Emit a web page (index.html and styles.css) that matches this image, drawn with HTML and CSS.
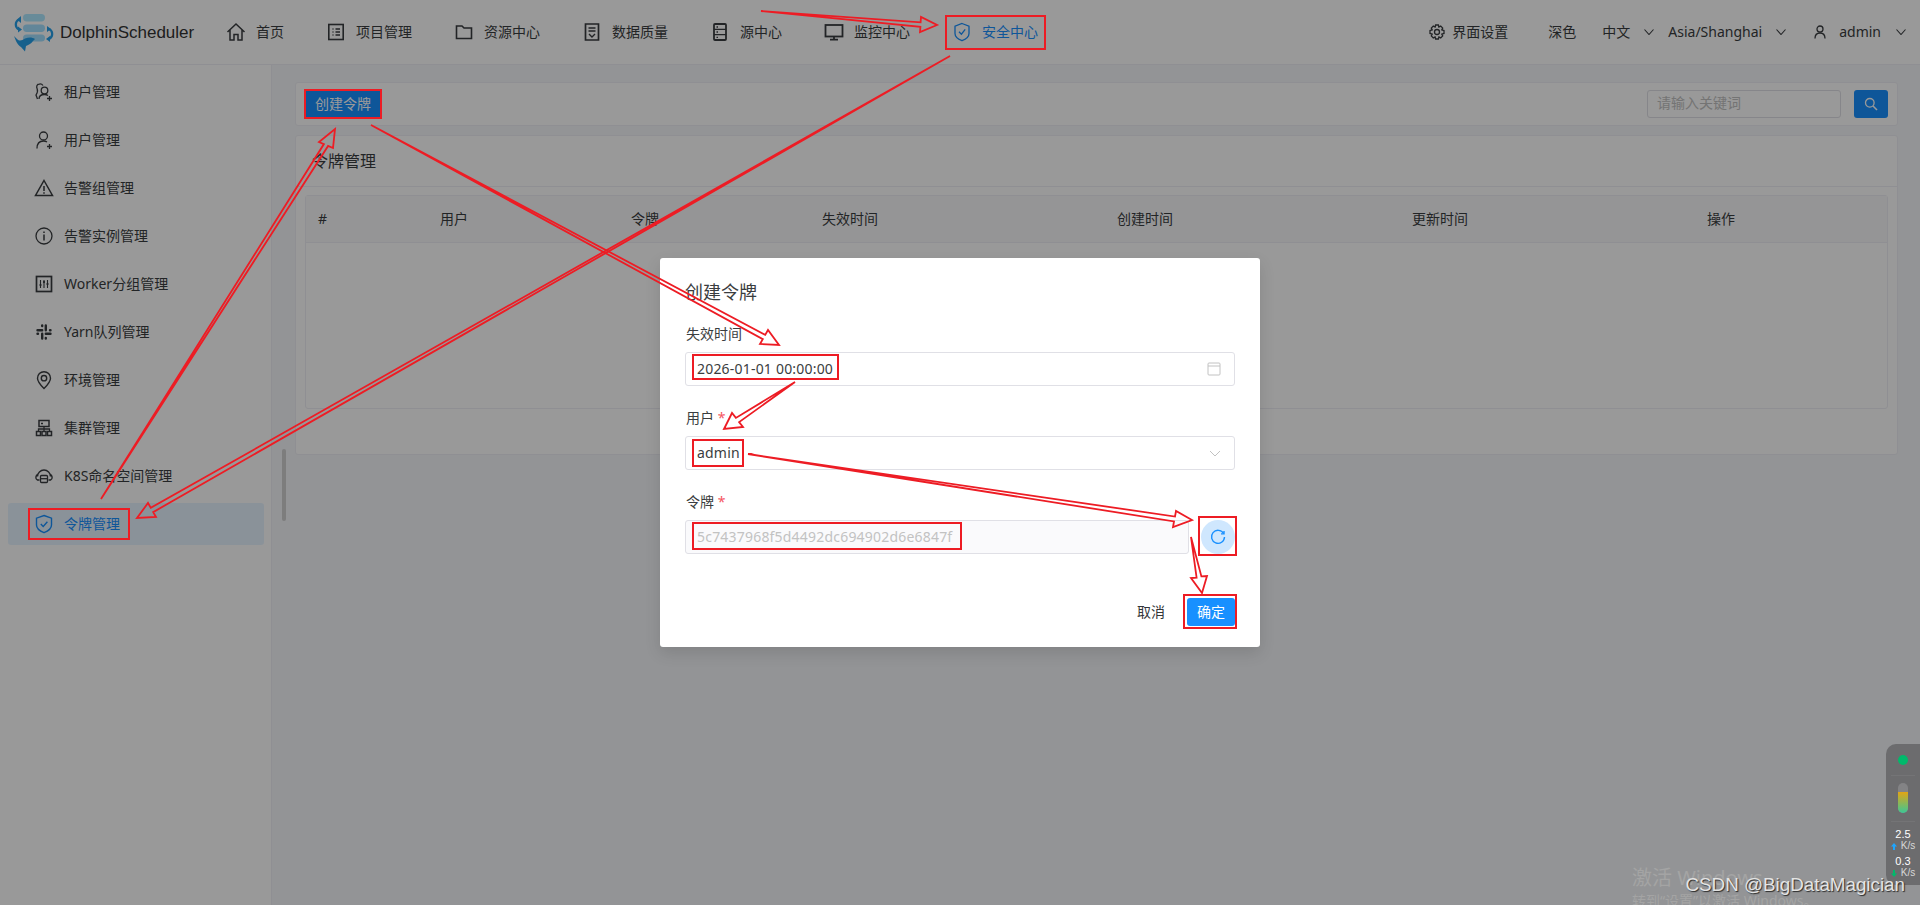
FILE: index.html
```html
<!DOCTYPE html>
<html lang="zh-CN">
<head>
  <meta charset="UTF-8">
  <title>DolphinScheduler</title>
  <link rel="stylesheet" href="styles.css">
</head>
<body>
  <div class="page">
    <header class="topbar">
      <div class="logo">
        <svg class="logo-icon" viewBox="0 0 44 38" width="44" height="38">
          <rect x="11" y="0" width="22" height="7.5" rx="3.7" fill="#aee8ff"/>
          <rect x="11" y="10.5" width="22" height="7.5" rx="3.7" fill="#a4e0ff"/>
          <rect x="11" y="20.5" width="22" height="7" rx="3.5" fill="#a4e0ff"/>
          <path d="M7 5.5 A5.5 5.5 0 0 0 7 15.5" fill="none" stroke="#26a0ea" stroke-width="2.2"/>
          <path d="M9 2 L5 5.5 L9 9 Z M6 12.5 L10 15.5 L6 18.5 Z" fill="#26a0ea"/>
          <path d="M37 15 A5.5 5.5 0 0 1 37 25" fill="none" stroke="#26a0ea" stroke-width="2.2"/>
          <path d="M35 12 L39 15 L35 18 Z M38 22 L34 25 L38 28 Z" fill="#26a0ea"/>
          <path d="M2 22 L5 25 C8 28 10 26 13 24.5 C17 23 20 23 23 25 L21 27 C19 30 16 31 14 32 L13 37.5 L9 33 C7 32 5 29 4 27 Z" fill="#26a0ea"/>
        </svg>
        <span class="logo-text">DolphinScheduler</span>
      </div>
      <nav class="nav">
        <a class="nav-item">
          <svg class="ico" viewBox="0 0 20 20"><path d="M1.5 10 L10 2 L18.5 10 M4 8 V18 H8 V12.5 H12 V18 H16 V8" stroke-width="1.5"/></svg>
          <span>首页</span>
        </a>
        <a class="nav-item">
          <svg class="ico" viewBox="0 0 20 20"><rect x="2.8" y="2.5" width="14.4" height="15" stroke-width="1.6"/><path d="M6.5 7 H7.5 M9.5 7 H14 M6.5 10 H7.5 M9.5 10 H14 M6.5 13 H7.5 M9.5 13 H14"/></svg>
          <span>项目管理</span>
        </a>
        <a class="nav-item">
          <svg class="ico" viewBox="0 0 20 20"><path d="M2.5 4 H8 L10 6 H17.5 V16.5 H2.5 Z" stroke-width="1.6"/></svg>
          <span>资源中心</span>
        </a>
        <a class="nav-item">
          <svg class="ico" viewBox="0 0 20 20"><path d="M3.5 2 H16.5 V18 H3.5 Z" stroke-width="1.7"/><path d="M6.5 6 H13.5 M6.5 9 H13.5 M7 12 L10 15 L13 12" stroke-width="1.4"/></svg>
          <span>数据质量</span>
        </a>
        <a class="nav-item">
          <svg class="ico" viewBox="0 0 20 20"><rect x="4" y="2" width="12" height="16" rx="1" stroke-width="1.8"/><path d="M4 7.3 H16 M4 12.6 H16 M6.5 5 H8 M6.5 10 H8 M6.5 15.3 H8"/></svg>
          <span>源中心</span>
        </a>
        <a class="nav-item">
          <svg class="ico" viewBox="0 0 20 20"><rect x="1.5" y="3" width="17" height="11.5" stroke-width="1.8"/><path d="M10 14.5 V17.5 M6 17.7 H14" stroke-width="1.8"/></svg>
          <span>监控中心</span>
        </a>
        <a class="nav-item is-active">
          <svg class="ico" viewBox="0 0 20 20"><path d="M10 1.5 L17 4.2 V11.5 C17 15 13 17.5 10 18.7 C7 17.5 3 15 3 11.5 V4.2 Z"/><path d="M7 9.8 L9.4 12.2 L13.2 7.4"/></svg>
          <span>安全中心</span>
        </a>
      </nav>
      <div class="top-right">
        <a class="top-item settings">
          <svg class="ico ico-sm" viewBox="0 0 16 16"><path d="M6.6 1 H9.4 L9.9 3 L11.7 2.1 L13.7 4.1 L12.8 5.9 L15 6.6 V9.4 L12.8 10.1 L13.7 11.9 L11.7 13.9 L9.9 13 L9.4 15 H6.6 L6.1 13 L4.3 13.9 L2.3 11.9 L3.2 10.1 L1 9.4 V6.6 L3.2 5.9 L2.3 4.1 L4.3 2.1 L6.1 3 Z"/><circle cx="8" cy="8" r="2.5"/></svg>
          <span>界面设置</span>
        </a>
        <a class="top-item theme"><span>深色</span></a>
        <a class="top-item lang">
          <span>中文</span>
          <svg class="chev" viewBox="0 0 10 6"><path d="M0.5 0.5 L5 5.5 L9.5 0.5"/></svg>
        </a>
        <a class="top-item zone">
          <span>Asia/Shanghai</span>
          <svg class="chev" viewBox="0 0 10 6"><path d="M0.5 0.5 L5 5.5 L9.5 0.5"/></svg>
        </a>
        <a class="top-item user">
          <svg class="ico ico-user" viewBox="0 0 12 14"><circle cx="6" cy="4" r="3"/><path d="M1 13.5 C1 9.5 3 8 6 8 C9 8 11 9.5 11 13.5"/></svg>
          <span class="user-name">admin</span>
          <svg class="chev" viewBox="0 0 10 6"><path d="M0.5 0.5 L5 5.5 L9.5 0.5"/></svg>
        </a>
      </div>
    </header>

    <div class="layout">
      <aside class="sidebar">
        <a class="side-item">
          <svg class="ico" viewBox="0 0 20 20"><circle cx="10.5" cy="8.5" r="3.3"/><path d="M9 3.5 A3.6 3.6 0 0 0 5.5 2 C3 2 2 4.5 3.2 7 C4 9 4 10 2 13 L3.5 17 M5 17 C5 14 7 12.5 10.5 12.5 C12 12.5 13 12.8 14 13.5 M15.5 14 V19 M13 16.5 H18"/></svg>
          <span>租户管理</span>
        </a>
        <a class="side-item">
          <svg class="ico" viewBox="0 0 20 20"><circle cx="9.5" cy="6" r="4"/><path d="M3 18.5 C3 13.5 5.5 11 9.5 11 C11 11 12 11.3 13 12 M15.5 14 V19 M13 16.5 H18"/></svg>
          <span>用户管理</span>
        </a>
        <a class="side-item">
          <svg class="ico" viewBox="0 0 20 20"><path d="M10 2.5 L18.5 17.5 H1.5 Z" stroke-width="1.5"/><path d="M10 8 V13 M10 14.2 V15.8" stroke-width="1.5"/></svg>
          <span>告警组管理</span>
        </a>
        <a class="side-item">
          <svg class="ico" viewBox="0 0 20 20"><circle cx="10" cy="10" r="8"/><path d="M10 8.5 V14.5 M10 5.5 V7" stroke-width="1.5"/></svg>
          <span>告警实例管理</span>
        </a>
        <a class="side-item">
          <svg class="ico" viewBox="0 0 20 20"><rect x="2.5" y="2.5" width="15" height="15" stroke-width="1.7"/><path d="M6.5 6 V14 M10 6 V14 M13.5 6 V14" stroke-width="1.1"/><path d="M5.6 11 H7.4 M9.1 8 H10.9 M12.6 10 H14.4" stroke-width="2"/></svg>
          <span>Worker分组管理</span>
        </a>
        <a class="side-item">
          <svg class="ico" viewBox="0 0 20 20"><path d="M3.5 8.2 H8.2 M8.2 3.5 V4 M11.8 3.5 V8.2 M16.5 8.2 H16 M16.5 11.8 H11.8 M11.8 16.5 V16 M8.2 16.5 V11.8 M3.5 11.8 H4" stroke-width="2.4" stroke-linecap="round"/></svg>
          <span>Yarn队列管理</span>
        </a>
        <a class="side-item">
          <svg class="ico" viewBox="0 0 20 20"><path d="M10 18.5 C7 15.5 3.5 12 3.5 8.2 A6.5 6.5 0 0 1 16.5 8.2 C16.5 12 13 15.5 10 18.5 Z" stroke-width="1.4"/><circle cx="10" cy="8.2" r="2.7" stroke-width="1.4"/></svg>
          <span>环境管理</span>
        </a>
        <a class="side-item">
          <svg class="ico" viewBox="0 0 20 20"><rect x="5" y="2.5" width="10" height="6" stroke-width="1.5"/><path d="M7 5.5 H9" stroke-width="1.5"/><path d="M10 8.5 V13 M4.5 13 V11 H15.5 V13" stroke-width="1.3"/><rect x="2.5" y="13.5" width="4" height="4" stroke-width="1.5"/><rect x="8" y="13.5" width="4" height="4" stroke-width="1.5"/><rect x="13.5" y="13.5" width="4" height="4" stroke-width="1.5"/></svg>
          <span>集群管理</span>
        </a>
        <a class="side-item">
          <svg class="ico" viewBox="0 0 20 20"><path d="M3.5 10.5 A6.5 6.5 0 0 1 16.5 10.5" stroke-width="1.4"/><path d="M4 8.5 C1.5 9 1 13 3.5 14 H5.5 M16 8.5 C18.5 9 19 13 16.5 14 H14.5" stroke-width="1.4"/><rect x="6.5" y="9.5" width="7" height="7" rx="1" stroke-width="1.3"/><path d="M6.5 12.7 H13.5" stroke-width="1.3"/></svg>
          <span>K8S命名空间管理</span>
        </a>
        <a class="side-item is-active">
          <svg class="ico" viewBox="0 0 20 20"><path d="M10 1.5 L17.5 4.2 V11 C17.5 15 13 17.5 10 18.7 C7 17.5 2.5 15 2.5 11 V4.2 Z" stroke-width="1.4"/><path d="M6.8 10 L9.2 12.4 L13.4 7.8" stroke-width="1.4"/></svg>
          <span>令牌管理</span>
        </a>
      </aside>
      <div class="side-scroll"></div>

      <main class="main">
        <section class="card toolbar">
          <button class="btn btn-primary">创建令牌</button>
          <div class="search">
            <div class="search-input">请输入关键词</div>
            <button class="btn btn-primary btn-search">
              <svg class="ico ico-search" viewBox="0 0 14 14"><circle cx="5.8" cy="5.8" r="4.3"/><path d="M9 9 L13 13" stroke-width="1.6"/></svg>
            </button>
          </div>
        </section>

        <section class="card list-card">
          <div class="card-title">令牌管理</div>
          <div class="table-wrap">
            <div class="table-head">
              <span>#</span>
              <span>用户</span>
              <span>令牌</span>
              <span>失效时间</span>
              <span>创建时间</span>
              <span>更新时间</span>
              <span>操作</span>
            </div>
          </div>
        </section>
      </main>
    </div>
  </div>

  <div class="mask">
    <div class="modal">
      <h3 class="modal-title">创建令牌</h3>
      <div class="form-item">
        <label class="form-label">失效时间</label>
        <div class="field">
          <span>2026-01-01 00:00:00</span>
          <svg class="field-ico" viewBox="0 0 14 14"><rect x="1" y="1" width="12" height="12" rx="1"/><path d="M1 4 H13"/></svg>
        </div>
      </div>
      <div class="form-item">
        <label class="form-label">用户 <em>*</em></label>
        <div class="field">
          <span>admin</span>
          <svg class="field-ico field-chev" viewBox="0 0 12 7"><path d="M1 1 L6 6 L11 1"/></svg>
        </div>
      </div>
      <div class="form-item">
        <label class="form-label">令牌 <em>*</em></label>
        <div class="token-row">
          <div class="field is-disabled"><span>5c7437968f5d4492dc694902d6e6847f</span></div>
          <button class="refresh">
            <svg viewBox="0 0 16 16" width="16" height="16"><path d="M13.6 4.5 A6.5 6.5 0 1 0 14.5 8"/><path d="M14 2 V4.9 H11"/></svg>
          </button>
        </div>
      </div>
      <div class="modal-foot">
        <button class="btn btn-text">取消</button>
        <button class="btn btn-confirm">确定</button>
      </div>
    </div>
  </div>

  <div class="net-widget">
    <i class="net-dot"></i>
    <i class="net-line"></i>
    <div class="net-pill"><b></b></div>
    <i class="net-line"></i>
    <div class="net-rate">2.5</div>
    <div class="net-unit">
      <svg class="net-arrow arrow-up" viewBox="0 0 6 7"><path d="M3 0 L6 3.5 H4 V7 H2 V3.5 H0 Z"/></svg>
      <span>K/s</span>
    </div>
    <div class="net-rate">0.3</div>
    <div class="net-unit">
      <svg class="net-arrow arrow-down" viewBox="0 0 6 7"><path d="M3 7 L6 3.5 H4 V0 H2 V3.5 H0 Z"/></svg>
      <span>K/s</span>
    </div>
  </div>

  <svg class="notes" viewBox="0 0 1920 905" width="1920" height="905">
    <g class="note-box">
      <rect x="946" y="16" width="99" height="33"/>
      <rect x="305" y="90" width="76" height="28"/>
      <rect x="29" y="509" width="100" height="30"/>
      <rect x="693" y="355" width="145" height="24"/>
      <rect x="693" y="440" width="50" height="26"/>
      <rect x="693" y="523" width="268" height="26"/>
      <rect x="1199" y="517" width="37" height="38"/>
      <rect x="1184" y="595" width="52" height="33"/>
    </g>
    <g class="note-arrow">
      <polygon points="761,11 920.6,22.3 921,17 937,25 920,32 920.4,26.8"/>
      <polygon points="950,56 150.8,507.9 148,503 137,518 156,517 153.2,512.1"/>
      <polygon points="101,499 323.9,144.1 319,142 335,129 333,148 328.1,145.9"/>
      <polygon points="371,125 765.2,334.9 768,330 779,345 760,344 762.8,339.1"/>
      <polygon points="795,382 735.9,417.9 732,413 724,429 743,427 739.1,422.1"/>
      <polygon points="748,454 1175,516.6 1176,511 1192,520 1173,527 1174,521.4"/>
      <polygon points="1191,537 1196.6,577.6 1191,578 1202,593 1207,576 1201.4,576.4"/>
    </g>
  </svg>

  <div class="activate">
    <div class="activate-big">激活 Windows</div>
    <div class="activate-small">转到“设置”以激活 Windows。</div>
  </div>
  <div class="csdn">CSDN @BigDataMagician</div>
</body>
</html>
```

FILE: styles.css
```css
* { margin: 0; padding: 0; box-sizing: border-box; }
html, body {
  width: 1920px;
  height: 905px;
  overflow: hidden;
}
body {
  font-family: "Noto Sans", "Noto Sans CJK SC", sans-serif;
  font-size: 14px;
  color: #3a3d40;
  background-color: #fff;
  position: relative;
}
button {
  font-family: inherit;
  font-size: 14px;
  border: none;
  cursor: pointer;
}
em { font-style: normal; color: #f5555f; }

/* icons */
.ico {
  width: 20px;
  height: 20px;
  flex: none;
  fill: none;
  stroke: currentColor;
  stroke-width: 1.3;
}
.ico-sm { width: 16px; height: 16px; }
.ico-user { width: 12px; height: 14px; }
.ico-search { width: 14px; height: 14px; }
.chev {
  width: 10px;
  height: 6px;
  fill: none;
  stroke: currentColor;
  stroke-width: 1.1;
}

/* top bar */
.topbar {
  height: 65px;
  display: flex;
  align-items: center;
  border-bottom: 1px solid #efeff5;
  padding-left: 12px;
}
.logo {
  width: 214px;
  display: flex;
  align-items: center;
  gap: 4px;
}
.logo-icon { margin-top: 1px; }
.logo-text {
  font-family: "Liberation Sans", sans-serif;
  font-size: 17px;
  color: #333;
  margin-top: 2px;
}
.nav {
  display: flex;
  gap: 42px;
}
.nav-item {
  display: flex;
  align-items: center;
  gap: 10px;
}
.nav-item span, .top-item span { padding-bottom: 2px; }
.nav-item.is-active { color: #1890ff; }
.top-right {
  margin-left: auto;
  display: flex;
  align-items: center;
  padding-right: 14px;
}
.top-item {
  display: flex;
  align-items: center;
}
.settings { gap: 7px; margin-right: 40px; }
.theme { margin-right: 26px; }
.lang { gap: 14px; margin-right: 14px; }
.zone { gap: 14px; margin-right: 28px; }
.user { gap: 13px; }
.user-name { margin-right: 2px; }

/* sidebar + content */
.layout {
  display: flex;
  height: 840px;
  position: relative;
}
.sidebar {
  width: 272px;
  flex: none;
  padding: 6px 7px 0 8px;
  border-right: 1px solid #efeff5;
  display: flex;
  flex-direction: column;
  gap: 6px;
}
.side-item {
  height: 42px;
  display: flex;
  align-items: center;
  gap: 10px;
  padding-left: 26px;
  border-radius: 3px;
}
.side-item span { padding-bottom: 2px; }
.side-item.is-active {
  color: #1890ff;
  background-color: rgba(24, 144, 255, 0.1);
}
.side-scroll {
  position: absolute;
  left: 282px;
  top: 384px;
  width: 4px;
  height: 72px;
  border-radius: 2px;
  background-color: #d0d0d0;
}
.main {
  flex: 1;
  background-color: #f5f7fa;
  padding: 17px 23px 0;
}
.card {
  background-color: #fff;
  border: 1px solid #efeff5;
  border-radius: 3px;
}
.toolbar {
  height: 44px;
  padding: 0 9px;
  display: flex;
  align-items: center;
  justify-content: space-between;
  margin-bottom: 9px;
}
.btn {
  height: 28px;
  padding: 0 10px 2px;
  border-radius: 3px;
  background: transparent;
}
.btn-primary { background-color: #1890ff; color: #fff; }
.search {
  display: flex;
  gap: 13px;
}
.search-input {
  width: 194px;
  height: 28px;
  line-height: 24px;
  padding-left: 9px;
  border: 1px solid #e0e0e6;
  border-radius: 3px;
  color: #c2c2c2;
}
.btn-search {
  width: 34px;
  padding: 0;
  display: flex;
  align-items: center;
  justify-content: center;
}
.list-card { height: 320px; }
.card-title {
  height: 51px;
  line-height: 50px;
  padding-left: 16px;
  font-size: 16px;
  border-bottom: 1px solid #efeff5;
}
.table-wrap {
  margin: 8px 9px 0;
  height: 214px;
  border: 1px solid #efeff5;
  border-radius: 3px;
}
.table-head {
  height: 47px;
  display: grid;
  grid-template-columns: 122px 191px 191px 295px 295px 295px 192px;
  align-items: center;
  background-color: #f9f9fb;
  border-bottom: 1px solid #efeff5;
}
.table-head span { padding: 0 0 2px 12px; }

/* dialog */
.mask {
  position: absolute;
  inset: 0;
  background-color: rgba(0, 0, 0, 0.4);
  display: flex;
  justify-content: center;
  align-items: flex-start;
  padding-top: 258px;
}
.modal {
  width: 600px;
  height: 389px;
  background-color: #fff;
  border-radius: 3px;
  padding: 21px 25px 0;
  box-shadow: 0 6px 16px rgba(0, 0, 0, 0.12);
}
.modal-title {
  font-size: 18px;
  font-weight: 400;
  line-height: 26px;
  margin-bottom: 18px;
}
.form-item {
  height: 84px;
}
.form-label {
  display: block;
  height: 29px;
  line-height: 22px;
  padding-left: 1px;
}
.field {
  height: 34px;
  display: flex;
  align-items: center;
  justify-content: space-between;
  padding: 0 13px 0 11px;
  border: 1px solid #e0e0e6;
  border-radius: 3px;
}
.field span {
  padding-bottom: 2px;
  letter-spacing: 0.2px;
}
.field-ico {
  width: 14px;
  height: 14px;
  fill: none;
  stroke: #c2c2c2;
  stroke-width: 1;
}
.field-chev { width: 12px; height: 7px; }
.token-row {
  display: flex;
  gap: 12px;
}
.token-row .field { flex: 1; }
.field.is-disabled {
  background-color: #fafafc;
  color: #c2c2c2;
}
.refresh {
  width: 34px;
  height: 34px;
  flex: none;
  border-radius: 50%;
  background-color: #cfe7fe;
  display: flex;
  align-items: center;
  justify-content: center;
}
.refresh svg {
  fill: none;
  stroke: #1890ff;
  stroke-width: 1.4;
}
.modal-foot {
  margin-top: 23px;
  display: flex;
  justify-content: flex-end;
  gap: 12px;
}
.btn-confirm {
  width: 48px;
  padding: 0 0 2px;
  background-color: #1890ff;
  color: #fff;
}
.btn-text { color: #333639; }

/* net speed widget */
.net-widget {
  position: absolute;
  right: 0;
  top: 744px;
  width: 34px;
  height: 141px;
  background-color: #6c6c6e;
  border-radius: 10px 0 0 10px;
  display: flex;
  flex-direction: column;
  align-items: center;
  padding-top: 11px;
  color: #fff;
}
.net-dot {
  width: 10px;
  height: 10px;
  border-radius: 50%;
  background-color: #00b96b;
  margin-bottom: 10px;
}
.net-line {
  width: 24px;
  height: 1px;
  background-color: #747476;
}
.net-pill {
  width: 10px;
  height: 30px;
  margin: 7px 0 8px;
  border-radius: 5px;
  background-color: #838385;
  overflow: hidden;
  display: flex;
  align-items: flex-end;
}
.net-pill b {
  display: block;
  width: 100%;
  height: 21px;
  background: linear-gradient(#e2a514, #3cc796);
}
.net-rate {
  font-family: "Liberation Sans", sans-serif;
  font-size: 11px;
  line-height: 13px;
  margin-top: 6px;
}
.net-unit + .net-rate { margin-top: 4px; }
.net-unit {
  font-family: "Liberation Sans", sans-serif;
  font-size: 10px;
  line-height: 11px;
  color: #d8d8d8;
  display: flex;
  align-items: center;
  gap: 4px;
  margin-top: -1px;
}
.net-arrow { width: 6px; height: 7px; margin-top: 2px; }
.arrow-up { fill: #1ea5ff; }
.arrow-down { fill: #00b96b; }

/* hand drawn notes on top of the shot */
.notes {
  position: absolute;
  left: 0;
  top: 0;
  pointer-events: none;
}
.note-box rect {
  fill: none;
  stroke: #ed1c24;
  stroke-width: 2;
}
.note-arrow polygon {
  fill: none;
  stroke: #ed1c24;
  stroke-width: 1.8;
}

.activate {
  position: absolute;
  left: 1632px;
  top: 864px;
  color: #a4a4a4;
}
.activate-big { font-size: 20px; line-height: 28px; }
.activate-small { font-size: 14px; line-height: 18px; }
.csdn {
  position: absolute;
  right: 15px;
  top: 873px;
  font-family: "Liberation Sans", sans-serif;
  font-size: 18.8px;
  line-height: 24px;
  color: #e4e4e4;
  text-shadow: 1px 1px 1px #2a2a2a;
}
```
